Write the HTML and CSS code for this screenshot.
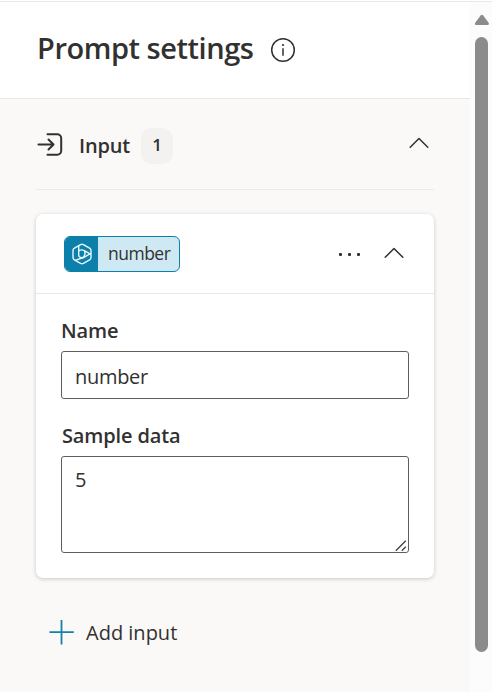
FILE: index.html
```html
<!DOCTYPE html>
<html lang="en">
<head>
<meta charset="utf-8">
<title>Prompt settings</title>
<link rel="stylesheet" href="styles.css">
</head>
<body>
<div class="app">
  <main class="panel">
    <header class="header">
      <h1 class="title">Prompt settings</h1>
      <svg class="info" width="26" height="26" viewBox="0 0 26 26" fill="none" stroke="#323130">
        <circle cx="13" cy="13" r="11.3" stroke-width="1.5"/>
        <path d="M13 11.2v7.6" stroke-width="1.5"/>
        <circle cx="13" cy="8" r="1.1" fill="#323130" stroke="none"/>
      </svg>
    </header>
    <section class="content">
      <div class="section-head">
        <svg class="input-icon" width="26" height="24" viewBox="0 0 26 24" fill="none" stroke="#323130" stroke-width="2" stroke-linecap="round" stroke-linejoin="round">
          <path d="M10.500 1.300h9.700a4 4 0 0 1 4 4v12.400a4 4 0 0 1-4 4h-9.700M1.500 11.500h14.500M11.500 6.500l5 5-5 5"/>
        </svg>
        <h2 class="section-title">Input</h2>
        <span class="count">1</span>
        <svg class="chevron" width="20" height="12" viewBox="0 0 20 12"><path d="M1.2 10.3 10 1.5l8.8 8.8"/></svg>
      </div>
      <article class="card">
        <div class="card-head">
          <div class="tag">
            <span class="tag-icon">
              <svg width="22" height="22" viewBox="0 0 22 22" fill="none" stroke="#e8f7fc" stroke-width="1.4" stroke-linejoin="round" stroke-linecap="round">
                <path d="M9.600 1.600Q11 .9 12.400 1.600L18.600 5.200Q20 6 20 7.600v6.800q0 1.600-1.400 2.400l-6.200 3.600q-1.400.700-2.800 0L3.400 16.800Q2 16 2 14.400V7.600Q2 6 3.400 5.200z"/>
                <path d="M7.700 3v9q0 1.500 1.300 2.100l1.500.6q1.300.4 2.500-.4l6.600-3.800"/>
                <path d="M7.700 7.500q3.300-1.300 5.600.1l6.200 3.500M13.500 8q1.500 4-1.500 6.500L4.500 17.300"/>
              </svg>
            </span>
            <span class="tag-text">number</span>
          </div>
          <div class="dots"><i></i><i></i><i></i></div>
          <svg class="chevron" width="20" height="12" viewBox="0 0 20 12"><path d="M1.200 10.300 10 1.500l8.800 8.800"/></svg>
        </div>
        <div class="fields">
          <label class="label name-label" for="name">Name</label>
          <div class="field" id="name"><span class="name-value">number</span></div>
          <label class="label sample-label" for="sample">Sample data</label>
          <div class="field area" id="sample"><span>5</span>
            <svg class="grip" width="12" height="12" viewBox="0 0 12 12" fill="none" stroke="#484644" stroke-width="1.400"><path d="M.8 10.800 10.800.8M6.800 10.800l4-4"/></svg>
          </div>
        </div>
      </article>
      <div class="add">
        <svg width="25" height="25" viewBox="0 0 25 25" fill="none" stroke="#1580a8" stroke-width="1.800"><path d="M12.500 0v24.500M.5 12.200h24.300"/></svg>
        <span class="add-text">Add input</span>
      </div>
    </section>
  </main>
  <aside class="scrollbar">
    <svg width="16" height="12" viewBox="0 0 16 12"><path d="M6.600 1.500q1.300-1.500 2.600 0l5.400 7.200q1 2.100-1 2.300H2.200q-2-.2-1-2.300z" fill="#8b8b8b"/></svg>
    <div class="thumb"></div>
  </aside>
</div>
</body>
</html>
```
FILE: styles.css
```css
* { box-sizing: border-box; }
body {
  margin: 0;
  background: #fff;
  color: #323130;
  font-family: "Open Sans", "Noto Sans", sans-serif;
  font-size: 20px;
}
svg { display: block; flex: none; }
.app {
  display: flex;
  height: 692px;
  padding-top: 1px;
  overflow: hidden;
  box-shadow: inset 0 1px #fff, inset 0 2px #e9e9e9;
}
.panel { width: 470px; display: flex; flex-direction: column; }
.header {
  height: 98px;
  padding: 0 0 0 37px;
  display: flex;
  align-items: center;
  border-bottom: 1px solid #e8e8e7;
}
.title {
  width: 233px;
  margin: -3px 0 0;
  font-size: 29px;
  line-height: 40px;
  font-weight: 600;
  white-space: nowrap;
  letter-spacing: -0.45px;
}
.info { margin-top: 1px; }
.content { flex: 1; padding: 0 36px; background: #faf9f8; }
.section-head {
  height: 91px;
  display: flex;
  align-items: center;
  border-bottom: 1px solid #ebeae9;
}
.input-icon { margin: 1px 0 0 1px; }
.section-title {
  width: 62px;
  margin: 4px 0 0 16px;
  font-size: 20px;
  line-height: 28px;
  font-weight: 600;
  letter-spacing: -0.15px;
}
.count {
  width: 32px;
  height: 36px;
  margin-top: 3px;
  border-radius: 11px;
  background: #f3f2f1;
  font-size: 17px;
  font-weight: 600;
  line-height: 34px;
  text-align: center;
}
.chevron { fill: none; stroke: #323130; stroke-width: 1.5; stroke-linecap: round; stroke-linejoin: round; }
.section-head .chevron { margin: -3px 5px 0 auto; }
.card {
  height: 364px;
  margin: 24px 0 0;
  background: #fff;
  border-radius: 7px;
  box-shadow: 0 1px 4px rgba(0, 0, 0, .2);
}
.card-head {
  height: 80px;
  padding: 0 30px 0 28px;
  display: flex;
  align-items: center;
  border-bottom: 1px solid #e8e8e8;
}
.card-head .chevron { margin-top: -1px; }
.tag {
  width: 116px;
  height: 36px;
  display: flex;
  overflow: hidden;
  border: 1px solid #0c80ab;
  border-radius: 6px;
  background: #cee9f3;
}
.tag-icon { width: 33px; display: flex; align-items: center; padding-left: 6px; background: #0c80ab; }
.tag-text { padding-left: 10px; font-size: 17.5px; line-height: 32px; letter-spacing: -0.5px; }
.dots { display: flex; gap: 6px; margin: 1px 24px 0 auto; }
.dots i { width: 3px; height: 3px; border-radius: 1px; background: #323130; }
.fields { padding: 22px 25px 0; }
.label { display: block; height: 35px; padding-left: 1px; font-weight: 600; line-height: 30px; letter-spacing: -0.15px; }
.name-label { padding-left: 0; }
.field {
  height: 48px;
  padding: 0 13px;
  border: 1px solid #605e5c;
  border-radius: 3px;
  line-height: 49px;
}
.name-value { letter-spacing: -0.3px; }
.sample-label { margin-top: 22px; }
.area { position: relative; height: 97px; line-height: 45px; }
.grip { position: absolute; right: 1px; bottom: 0; }
.add { display: flex; align-items: center; margin: 40px 0 0 13px; line-height: 28px; }
.add-text { margin-left: 12px; padding-top: 1px; }
.scrollbar { width: 22px; padding: 12px 0 0 4px; background: #fcfcfc; margin-top: 1px; }
.thumb { width: 13px; height: 615px; margin: 11px 0 0 1px; border-radius: 7px; background: #8b8b8b; }
```
